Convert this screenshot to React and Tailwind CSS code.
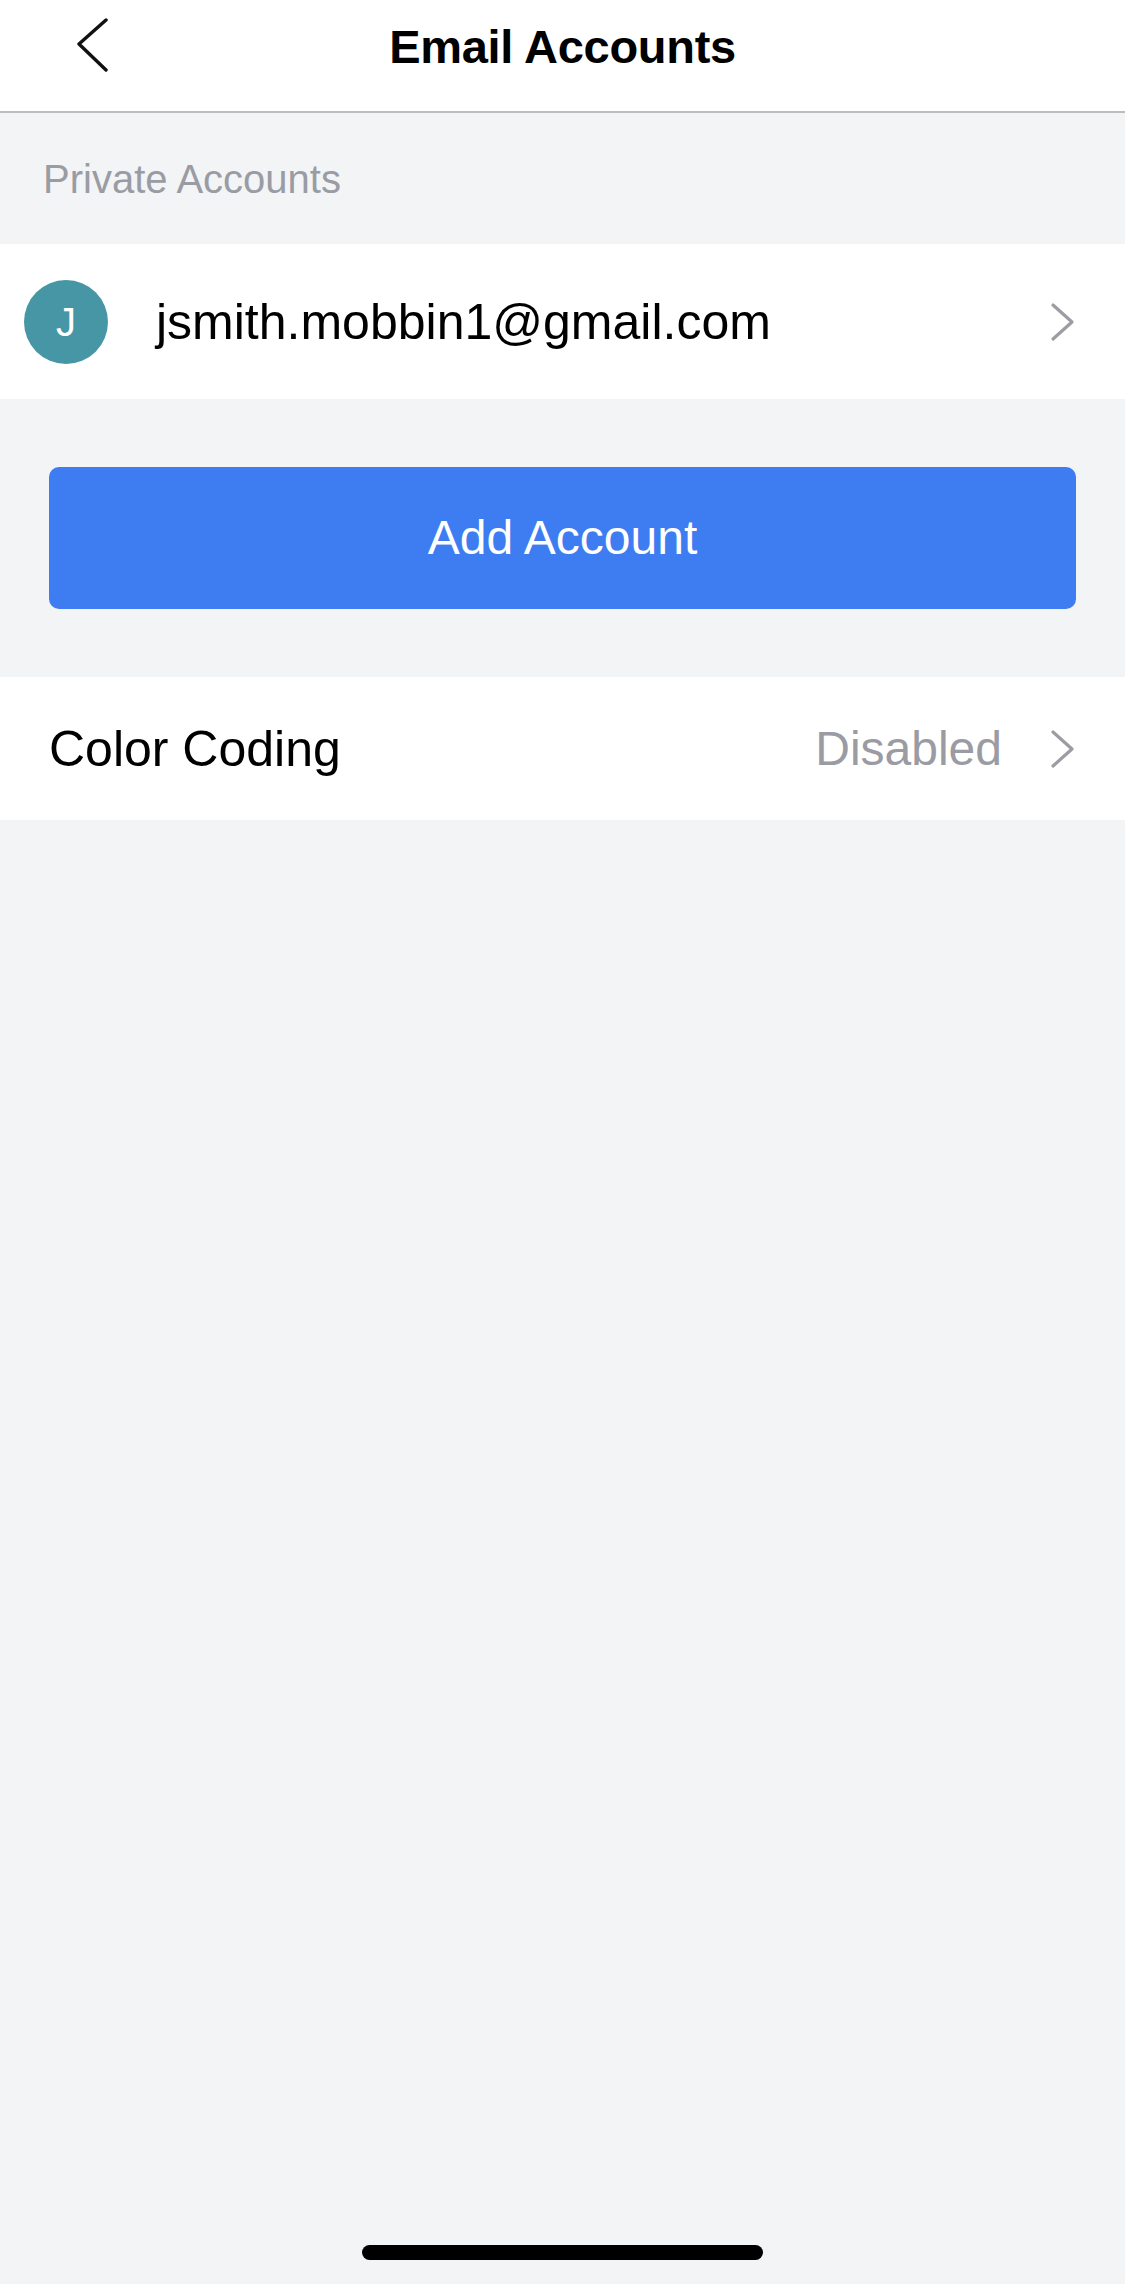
import React from "react";

const font = { fontFamily: '"Liberation Sans", Arial, sans-serif' };

function ChevronRight() {
  return (
    <svg width="26" height="40" viewBox="0 0 26 40" fill="none" className="shrink-0">
      <polyline
        points="3,3 22,20 3,37"
        stroke="#9c9da4"
        strokeWidth="3.2"
        strokeLinecap="round"
        strokeLinejoin="round"
      />
    </svg>
  );
}

export default function App() {
  return (
    <div className="min-h-[2284px] w-[1125px] bg-[#f3f4f6] flex flex-col" style={font}>
      {/* header */}
      <div className="h-[113px] bg-white border-b-2 border-[#bdbdbd]">
        <div className="h-[92px] grid grid-cols-[1fr_auto_1fr] items-center">
          <div className="pl-[76px] flex items-center">
            <svg width="34" height="56" viewBox="0 0 34 56" fill="none">
              <polyline
                points="30,2 3,26 30,52"
                stroke="#111"
                strokeWidth="3.4"
                strokeLinecap="round"
                strokeLinejoin="round"
              />
            </svg>
          </div>
          <div className="text-[47px] leading-none font-bold text-black tracking-[-0.3px]">
            Email Accounts
          </div>
          <div />
        </div>
      </div>

      {/* section label */}
      <div className="h-[131px] flex items-center pl-[43px]">
        <span className="text-[40px] leading-none text-[#9a9ca3]">Private Accounts</span>
      </div>

      {/* account row */}
      <div className="h-[155px] bg-white flex items-center pl-[24px] pr-[49px]">
        <div className="w-[84px] h-[84px] rounded-full bg-[#4796a6] flex items-center justify-center">
          <span className="text-[40px] leading-none text-white">J</span>
        </div>
        <span className="ml-[48px] text-[50px] leading-none text-black flex-1">
          jsmith.mobbin1@gmail.com
        </span>
        <ChevronRight />
      </div>

      {/* add account */}
      <div className="px-[49px] py-[68px]">
        <button className="w-full h-[142px] rounded-[10px] bg-[#3d7cf1] text-white text-[48px] leading-none flex items-center justify-center">
          Add Account
        </button>
      </div>

      {/* color coding */}
      <div className="h-[143px] bg-white flex items-center pl-[49px] pr-[49px]">
        <span className="text-[50px] leading-none text-black flex-1">Color Coding</span>
        <span className="text-[48px] leading-none text-[#9a9ba3] mr-[48px]">Disabled</span>
        <ChevronRight />
      </div>

      <div className="flex-1" />

      {/* home indicator */}
      <div className="h-[70px] flex justify-center pt-[31px]">
        <div className="w-[401px] h-[15px] rounded-full bg-black" />
      </div>
    </div>
  );
}
